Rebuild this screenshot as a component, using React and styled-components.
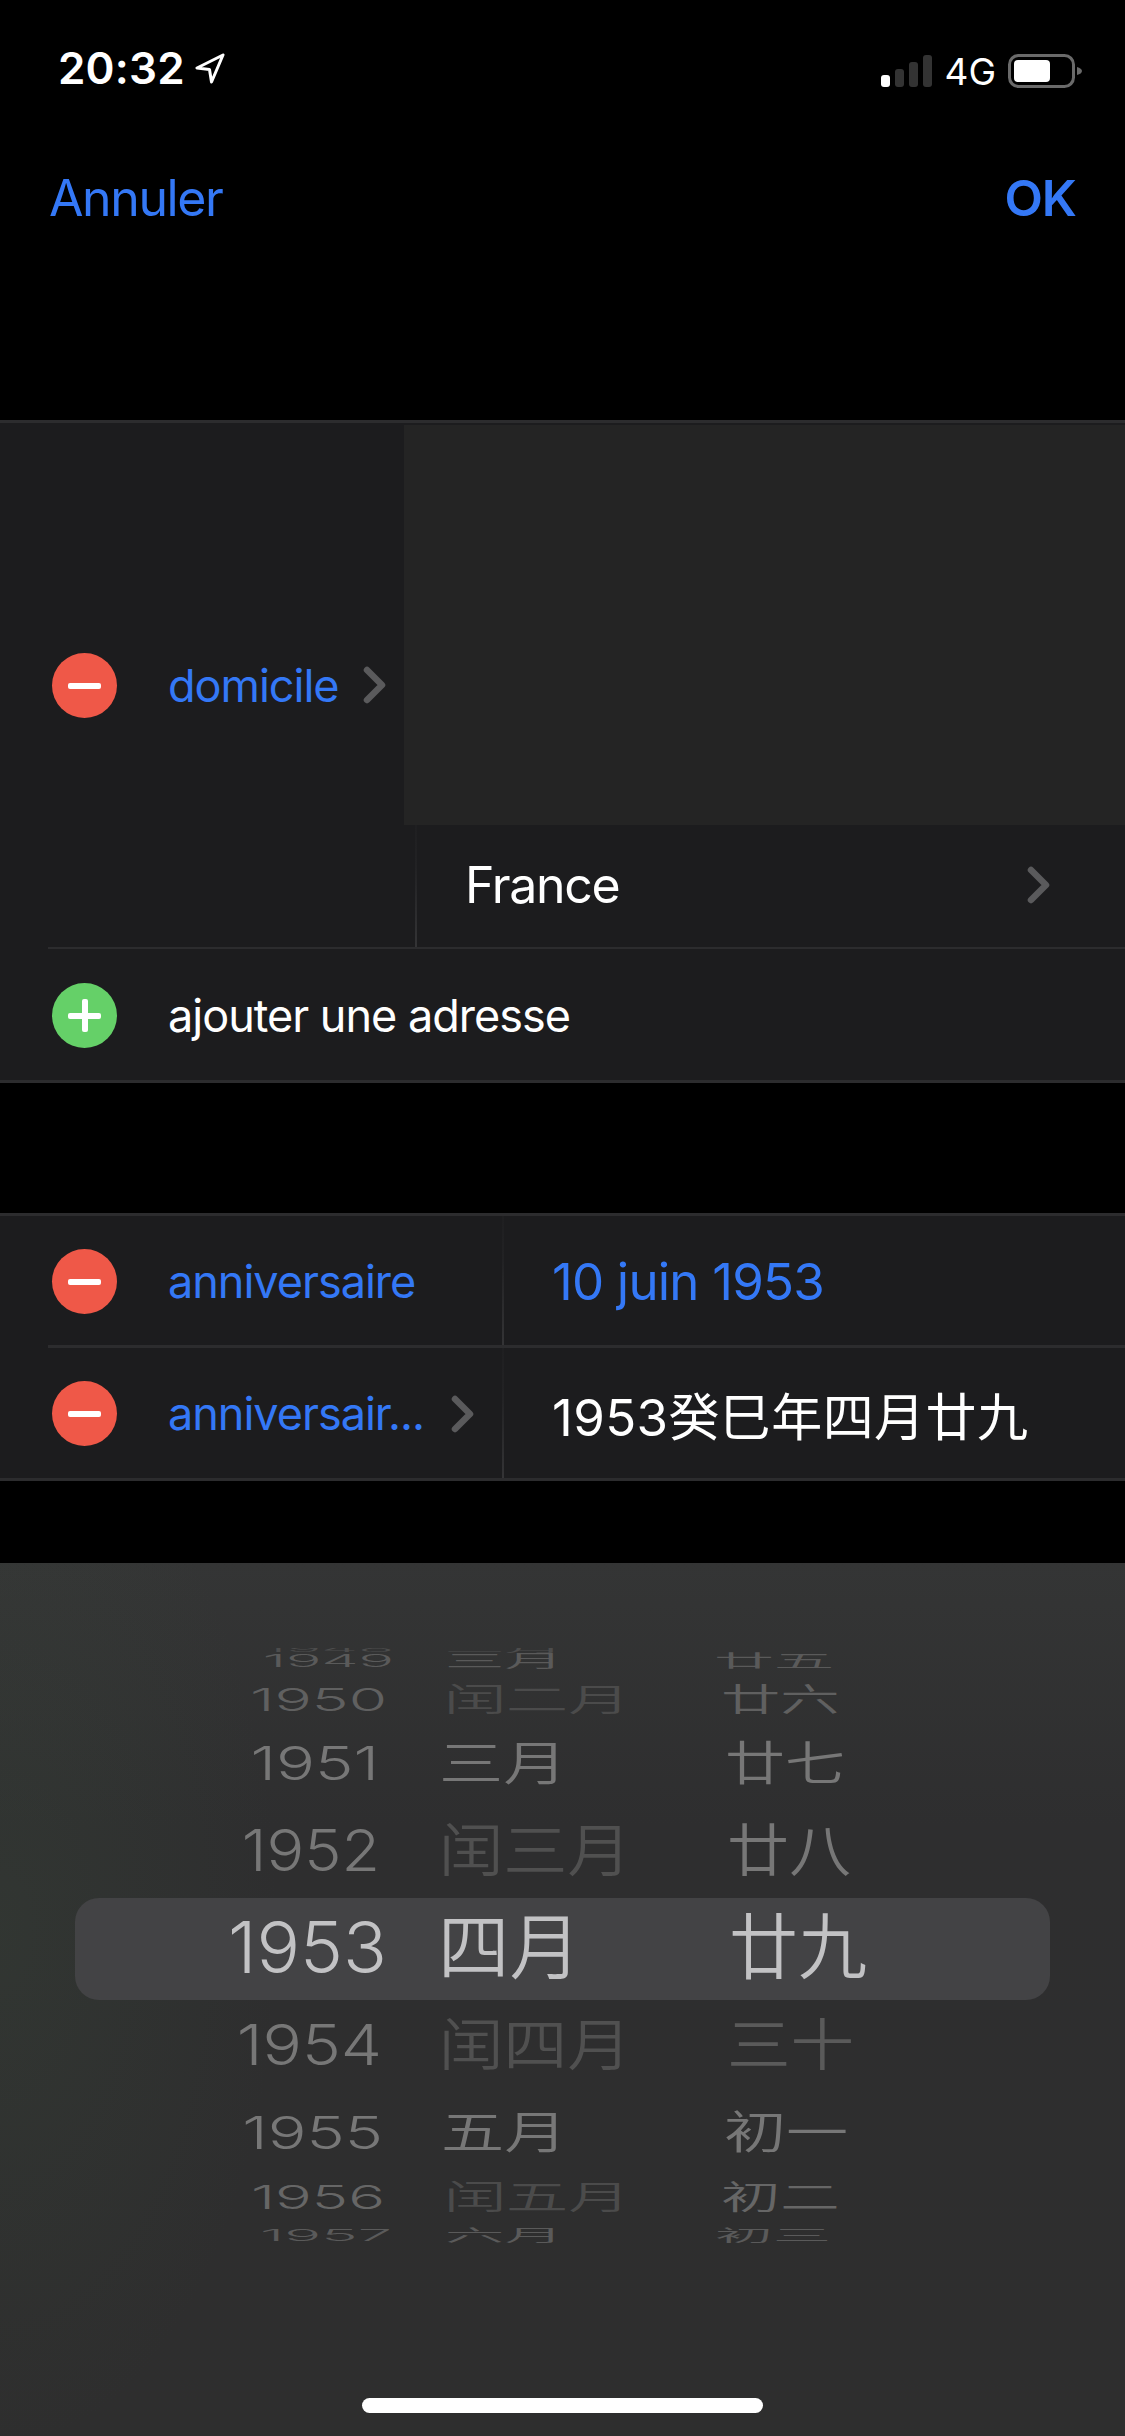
import React from 'react'
import styled, { createGlobalStyle, css } from 'styled-components'

const GlobalStyle = createGlobalStyle`
  html, body {
    margin: 0;
    padding: 0;
    background: #000;
  }
`

const BLUE = '#3478f6'
const LINE = '#2c2c2e'

const Page = styled.div`
  width: 1125px;
  height: 2436px;
  background: #000;
  display: flex;
  flex-direction: column;
  overflow: hidden;
  font-family: Inter, "Noto Sans CJK SC", sans-serif;
  color: #fff;
`

const StatusBar = styled.div`
  height: 132px;
  box-sizing: border-box;
  padding: 46px 43px 0 58px;
  display: flex;
  justify-content: space-between;
  align-items: flex-start;
`

const TimeGroup = styled.div`
  display: flex;
  align-items: center;
  gap: 10px;
`

const Time = styled.span`
  font-size: 44px;
  line-height: 44px;
  font-weight: 600;
  letter-spacing: 0.2px;
`

const StatusIcons = styled.div`
  display: flex;
  align-items: center;
  gap: 12px;
  margin-top: 5px;
`

const NetworkLabel = styled.span`
  font-size: 37px;
  line-height: 36px;
  font-weight: 400;
  margin-top: 3px;
`

const Nav = styled.div`
  height: 132px;
  box-sizing: border-box;
  padding: 0 49px;
  margin-bottom: 156px;
  display: flex;
  justify-content: space-between;
  align-items: center;
`

const NavButton = styled.span`
  color: ${BLUE};
  font-size: 50px;
  font-weight: ${p => (p.$bold ? 600 : 400)};
  letter-spacing: ${p => (p.$bold ? '-1px' : '-1.4px')};
`

const Section = styled.div`
  background: #1c1c1e;
  border-top: 3px solid ${LINE};
  border-bottom: 3px solid ${LINE};
  margin-bottom: ${p => p.$gap}px;
`

const fadingDivider = css`
  border-left: 2px solid ${LINE};
  border-image: linear-gradient(#1f1f21, #222224 35%, #343436) 1;
`

const AddressBlock = styled.div`
  height: 526px;
  box-sizing: border-box;
  margin-left: 48px;
  border-bottom: 2px solid ${LINE};
  display: flex;
`

const AddressLabel = styled.div`
  width: 356px;
  box-sizing: border-box;
  padding-left: 4px;
  display: flex;
  align-items: center;
`

const AddressFields = styled.div`
  flex: 1;
  display: flex;
  flex-direction: column;
`

const EmptyField = styled.div`
  height: 400px;
  margin-top: 2px;
  background: #242424;
`

const CountryRow = styled.div`
  flex: 1;
  margin-left: 11px;
  padding: 0 74px 2px 48px;
  ${fadingDivider}
  display: flex;
  align-items: center;
  justify-content: space-between;
`

const AddRow = styled.div`
  height: 131px;
  box-sizing: border-box;
  padding: 2px 0 0 52px;
  display: flex;
  align-items: center;
`

const Row = styled.div`
  height: ${p => (p.$last ? 130 : 129)}px;
  margin-left: 48px;
  border-bottom: ${p => (p.$last ? 'none' : `3px solid ${LINE}`)};
  display: flex;
`

const RowLabel = styled.div`
  width: 454px;
  box-sizing: border-box;
  padding: 1px 0 0 4px;
  display: flex;
  align-items: center;
`

const RowValue = styled.div`
  flex: 1;
  padding: 2px 0 0 48px;
  ${fadingDivider}
  display: flex;
  align-items: center;
  font-size: 51px;
  letter-spacing: ${p => (p.$active ? '-0.8px' : '0.4px')};
  color: ${p => (p.$active ? BLUE : '#fff')};
`

const Badge = styled.span`
  width: 65px;
  height: 65px;
  border-radius: 50%;
  background: ${p => (p.$add ? '#65d068' : '#ef5848')};
  flex: none;
  position: relative;
  margin-right: 51px;

  &::before {
    content: "";
    position: absolute;
    left: 16px;
    top: 30px;
    width: 33px;
    height: 6px;
    border-radius: 2px;
    background: #fff;
  }

  ${p => p.$add && css`
    &::after {
      content: "";
      position: absolute;
      left: 30px;
      top: 16px;
      width: 6px;
      height: 33px;
      border-radius: 2px;
      background: #fff;
    }
  `}
`

const LabelText = styled.span`
  font-size: 45px;
  letter-spacing: -1px;
  color: ${p => (p.$plain ? '#fff' : BLUE)};
  white-space: nowrap;
`

const CountryText = styled.span`
  font-size: 50px;
  letter-spacing: -1.3px;
`

const ChevronIcon = styled.svg`
  width: 24px;
  height: 38px;
  flex: none;
  margin-left: ${p => p.$gap || 0}px;
`

const Picker = styled.div`
  flex: 1;
  display: flex;
  flex-direction: column;
  padding-top: 85px;
  background:
    radial-gradient(ellipse 280px 520px at 0 42%, rgba(66, 92, 66, 0.17), rgba(66, 92, 66, 0) 100%),
    linear-gradient(#343535, #2e2e2f 30%, #2e2e2e);
`

const Wheel = styled.div`
  height: 596px;
  margin: 0 75px;
  overflow: hidden;
`

const WheelInner = styled.div`
  margin-top: -16px;
`

const WheelRow = styled.div`
  height: ${p => p.$h}px;
  box-sizing: border-box;
  display: flex;
  align-items: center;
  font-size: 69px;
  line-height: 1;
  font-weight: 350;
  white-space: nowrap;

  ${p => p.$selected && css`
    margin-top: 4px;
    padding-bottom: 4px;
    background: #434345;
    border-radius: 24px;
  `}
`

const cellText = css`
  display: block;
  color: ${p => p.$color};
  transform: translateY(${p => p.$dy || 0}px) scale(${p => p.$sx}, ${p => p.$sy});
`

const YearCell = styled.span`
  width: ${p => 345 - p.$pad}px;
  padding-right: ${p => p.$pad}px;
  text-align: right;
  ${cellText}
  transform-origin: ${p => 345 - p.$pad}px 50%;
`

const MonthCell = styled.span`
  width: 258px;
  box-sizing: border-box;
  margin-left: 18px;
  padding-left: ${p => p.$pad}px;
  ${cellText}
  transform-origin: ${p => p.$pad}px 50%;
`

const DayCell = styled.span`
  padding-left: ${p => p.$pad}px;
  ${cellText}
  transform-origin: ${p => p.$pad}px 50%;
`

const HomeBar = styled.div`
  width: 401px;
  height: 15px;
  border-radius: 8px;
  background: #fff;
  align-self: center;
  margin-top: auto;
  margin-bottom: 23px;
`

const wheelRows = [
  { h: 0, dy: 17, y: '1948', m: '二月', d: '', yp: 26, ys: 0.85, yy: 0.12, yc: '#4c4c4c', mp: 7, ms: 0.86, mc: '#4c4c4c', dp: 18, ds: 0.87, dc: '#4c4c4c' },
  { h: 46, dy: 5, y: '1949', m: '三月', d: '廿五', yp: 26, ys: 0.855, yy: 0.25, yc: '#5a5a5a', mp: 7, ms: 0.86, mc: '#5a5a5a', dp: 18, ds: 0.87, dc: '#5a5a5a' },
  { h: 42, y: '1950', m: '闰二月', d: '廿六', yp: 33, ys: 0.9, yy: 0.46, yc: '#606060', mp: 6, ms: 0.9, mc: '#4b4b4b', dp: 25, ds: 0.86, dc: '#606060' },
  { h: 86, y: '1951', m: '三月', d: '廿七', yp: 41, ys: 0.94, yy: 0.67, yc: '#777', mp: 1, ms: 0.93, mc: '#777', dp: 29, ds: 0.87, dc: '#777' },
  { h: 88, y: '1952', m: '闰三月', d: '廿八', yp: 40, ys: 0.91, yy: 0.83, yc: '#777', mp: 1, ms: 0.93, mc: '#505050', dp: 31, ds: 0.9, dc: '#777' },
  { h: 102, selected: true, y: '1953', m: '四月', d: '廿九', yp: 33, ys: 1.05, yy: 1.03, yc: '#c2c2c4', mp: 0, ms: 1.035, mc: '#c2c2c4', dp: 33, ds: 1, dc: '#c2c2c4' },
  { h: 90, y: '1954', m: '闰四月', d: '三十', yp: 38, ys: 0.95, yy: 0.81, yc: '#777', mp: 1, ms: 0.93, mc: '#505050', dp: 31, ds: 0.92, dc: '#5a5a5a' },
  { h: 84, y: '1955', m: '五月', d: '初一', yp: 37, ys: 0.935, yy: 0.66, yc: '#777', mp: 3, ms: 0.915, mc: '#777', dp: 28, ds: 0.9, dc: '#777' },
  { h: 46, y: '1956', m: '闰五月', d: '初二', yp: 35, ys: 0.887, yy: 0.47, yc: '#666', mp: 6, ms: 0.9, mc: '#4b4b4b', dp: 25, ds: 0.86, dc: '#666' },
  { h: 30, y: '1957', m: '六月', d: '初三', yp: 28, ys: 0.89, yy: 0.23, yc: '#5a5a5a', mp: 7, ms: 0.86, mc: '#5a5a5a', dp: 19, ds: 0.84, dc: '#5a5a5a' },
]

function Chevron({ gap }) {
  return (
    <ChevronIcon $gap={gap} viewBox="0 0 24 38" fill="none">
      <path d="M4 4 L19 19 L4 34" stroke="#5a5a5c" strokeWidth="6.5" strokeLinecap="round" strokeLinejoin="round" />
    </ChevronIcon>
  )
}

function LocationArrow() {
  return (
    <svg width="30" height="31" viewBox="0 0 30 31" fill="none">
      <path d="M28 2 L2 15 L14.5 16.5 L16.5 29 Z" stroke="#fff" strokeWidth="3" strokeLinejoin="round" />
    </svg>
  )
}

function SignalBars() {
  return (
    <svg width="51" height="32" viewBox="0 0 51 32">
      <rect x="0" y="20" width="9" height="12" rx="3" fill="#fff" />
      <rect x="14" y="14" width="9" height="18" rx="3" fill="#333" />
      <rect x="28" y="7" width="9" height="25" rx="3" fill="#333" />
      <rect x="42" y="0" width="9" height="32" rx="3" fill="#333" />
    </svg>
  )
}

function Battery() {
  return (
    <svg width="74" height="34" viewBox="0 0 74 34">
      <rect x="1.5" y="1.5" width="64" height="31" rx="9" fill="none" stroke="#6a6a6a" strokeWidth="3" />
      <rect x="6" y="6" width="36" height="22" rx="4" fill="#fff" />
      <path d="M69 13 C72 14 74 15 74 17 C74 19 72 20 69 21 Z" fill="#6a6a6a" />
    </svg>
  )
}

export default function App() {
  return (
    <Page>
      <GlobalStyle />
      <StatusBar>
        <TimeGroup>
          <Time>20:32</Time>
          <LocationArrow />
        </TimeGroup>
        <StatusIcons>
          <SignalBars />
          <NetworkLabel>4G</NetworkLabel>
          <Battery />
        </StatusIcons>
      </StatusBar>

      <Nav>
        <NavButton>Annuler</NavButton>
        <NavButton $bold>OK</NavButton>
      </Nav>

      <Section $gap={130}>
        <AddressBlock>
          <AddressLabel>
            <Badge />
            <LabelText>domicile</LabelText>
            <Chevron gap={24} />
          </AddressLabel>
          <AddressFields>
            <EmptyField />
            <CountryRow>
              <CountryText>France</CountryText>
              <Chevron />
            </CountryRow>
          </AddressFields>
        </AddressBlock>
        <AddRow>
          <Badge $add />
          <LabelText $plain>ajouter une adresse</LabelText>
        </AddRow>
      </Section>

      <Section $gap={82}>
        <Row>
          <RowLabel>
            <Badge />
            <LabelText>anniversaire</LabelText>
          </RowLabel>
          <RowValue $active>10 juin 1953</RowValue>
        </Row>
        <Row $last>
          <RowLabel>
            <Badge />
            <LabelText>anniversair...</LabelText>
            <Chevron gap={27} />
          </RowLabel>
          <RowValue>1953癸巳年四月廿九</RowValue>
        </Row>
      </Section>

      <Picker>
        <Wheel>
          <WheelInner>
            {wheelRows.map(r => (
              <WheelRow key={r.y} $h={r.h} $selected={r.selected}>
                <YearCell $pad={r.yp} $sx={r.ys} $sy={r.yy} $dy={r.dy} $color={r.yc}>{r.y}</YearCell>
                <MonthCell $pad={r.mp} $sx={r.ms} $sy={r.yy} $dy={r.dy} $color={r.mc}>{r.m}</MonthCell>
                <DayCell $pad={r.dp} $sx={r.ds} $sy={r.yy} $dy={r.dy} $color={r.dc}>{r.d}</DayCell>
              </WheelRow>
            ))}
          </WheelInner>
        </Wheel>
        <HomeBar />
      </Picker>
    </Page>
  )
}
